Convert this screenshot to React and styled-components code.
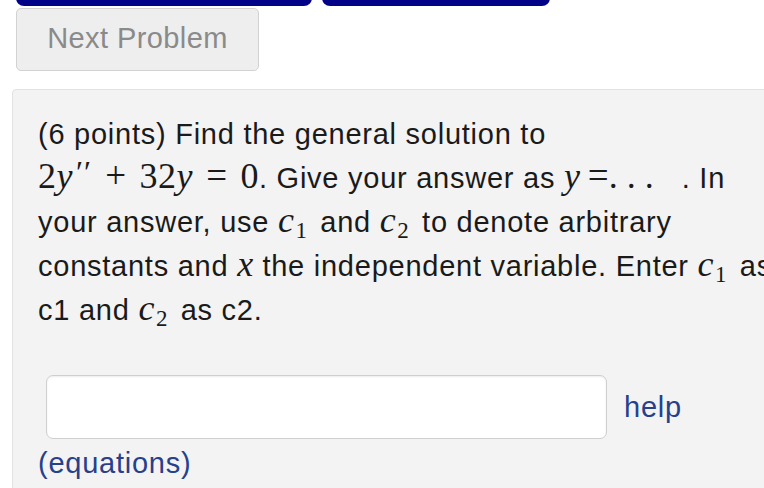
import React from 'react';
import styled, { createGlobalStyle } from 'styled-components';

const Global = createGlobalStyle`
  html, body { margin: 0; padding: 0; background: #fff; }
  body { font-family: "Liberation Sans", Arial, sans-serif; overflow: hidden; width: 764px; height: 488px; }
`;

const Page = styled.div`
  width: 764px;
  height: 488px;
  overflow: hidden;
`;

const TopBar = styled.div`
  display: flex;
  gap: 10px;
  padding-left: 16px;
  margin-top: -40px;
  height: 46px;
`;

const NavButton = styled.div`
  width: ${p => p.w}px;
  height: 46px;
  background: #020288;
  border-radius: 8px;
`;

const NextButton = styled.div`
  margin: 2px 0 0 16px;
  width: 243px;
  height: 63px;
  box-sizing: border-box;
  background: #eeeeee;
  border: 1px solid #d2d2d2;
  border-radius: 5px;
  color: #8a8a8a;
  font-size: 29px;
  letter-spacing: 0.4px;
  display: flex;
  align-items: center;
  justify-content: center;
  padding-bottom: 2px;
`;

const ProblemBox = styled.div`
  margin: 18px 0 0 12px;
  width: 800px;
  height: 420px;
  box-sizing: border-box;
  background: #f3f3f3;
  border: 1px solid #e2e2e2;
  border-radius: 4px;
  padding: 22px 0 0 25px;
`;

const Text = styled.div`
  font-size: 29px;
  line-height: 44px;
  height: 44px;
  color: #1a1a1a;
  white-space: nowrap;
  letter-spacing: 0.75px;
`;

const M = styled.span`
  font-family: "Liberation Serif", "Times New Roman", serif;
  font-style: ${p => (p.i ? 'italic' : 'normal')};
  font-size: 36px;
  line-height: 0;
  letter-spacing: ${p => p.ls ?? 0.5}px;
  margin-right: ${p => p.mr || 0}px;
`;

const Op = styled.span`
  font-family: "Liberation Serif", "Times New Roman", serif;
  font-size: 37px;
  line-height: 0;
  letter-spacing: 0;
  margin: 0 ${p => p.sp}em 0 ${p => p.spl ?? p.sp}em;
`;

const Prime = styled.span`
  font-family: "Liberation Serif", serif;
  font-size: 32px;
  letter-spacing: 1px;
  vertical-align: 5px;
  line-height: 0;
  margin-left: 3px;
`;

const Sub = styled.sub`
  font-family: "Liberation Serif", serif;
  font-style: normal;
  font-size: 23px;
  vertical-align: -6px;
  line-height: 0;
  margin-left: 1px;
  margin-right: 4px;
`;

const AnswerRow = styled.div`
  display: flex;
  align-items: center;
  margin-top: 43px;
  padding-left: 8px;
`;

const AnswerInput = styled.div`
  width: 561px;
  height: 64px;
  box-sizing: border-box;
  background: #fff;
  border: 1px solid #cfcfcf;
  border-radius: 7px;
  box-shadow: inset 0 1px 2px rgba(0,0,0,0.08);
`;

const HelpLink = styled.span`
  color: #27408b;
  font-size: 29px;
  letter-spacing: 0.75px;
  margin-left: 17px;
`;

const Equations = styled.div`
  color: #27408b;
  font-size: 29px;
  letter-spacing: 0.75px;
  line-height: 44px;
  margin-top: 2px;
`;

const C = ({ n }) => (
  <M i>c<Sub>{n}</Sub></M>
);

export default function App() {
  return (
    <Page>
      <Global />
      <TopBar>
        <NavButton w={296} />
        <NavButton w={228} />
      </TopBar>
      <NextButton>Next Problem</NextButton>
      <ProblemBox>
        <Text>(6 points) Find the general solution to</Text>
        <Text>
          <M>2</M><M i>y</M><Prime>′′</Prime><Op sp={0.36}>+</Op><M>32</M><M i>y</M><Op sp={0.36}>=</Op><M>0</M>. Give your answer as <M i>y</M><Op sp={0} spl={0.2}>=</Op><M ls={0} mr={28}>. . .</M>. In
        </Text>
        <Text>your answer, use <C n={1} /> and <C n={2} /> to denote arbitrary</Text>
        <Text>constants and <M i>x</M> the independent variable. Enter <C n={1} /> as</Text>
        <Text>c1 and <C n={2} /> as c2.</Text>
        <AnswerRow>
          <AnswerInput />
          <HelpLink>help</HelpLink>
        </AnswerRow>
        <Equations>(equations)</Equations>
      </ProblemBox>
    </Page>
  );
}
